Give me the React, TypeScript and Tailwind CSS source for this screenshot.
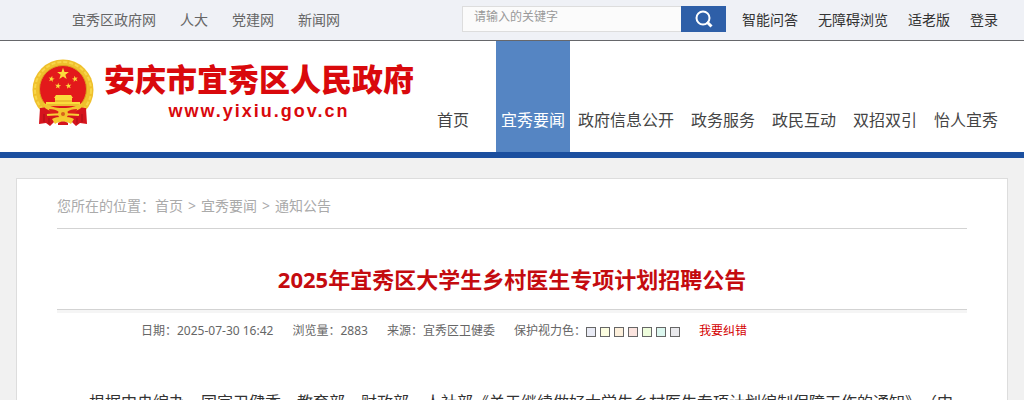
const siteLinks = ['宜秀区政府网', '人大', '党建网', '新闻网'];
const toolLinks = ['智能问答', '无障碍浏览', '适老版', '登录'];
const navLinks = ['政府信息公开', '政务服务', '政民互动', '双招双引', '怡人宜秀'];

const eyeColors = [
  { name: '灰蓝', className: 'bg-[#e9ebf5]' },
  { name: '浅黄', className: 'bg-[#fcfde0]' },
  { name: '杏色', className: 'bg-[#fdf0dc]' },
  { name: '粉红', className: 'bg-[#fbe4df]' },
  { name: '浅绿', className: 'bg-[#eefddc]' },
  { name: '青色', className: 'bg-[#dcf7ef]' },
  { name: '浅灰', className: 'bg-[#e9e9ec]' },
];

const STAR = 'M0-10 2.4-3.2 9.5-3.1 3.8 1.2 5.9 8.1 0 4-5.9 8.1-3.8 1.2-9.5-3.1-2.4-3.2Z';

function Emblem() {
  return (
    <svg viewBox="0 0 62 68" className="h-[68px] w-[62px] shrink-0" aria-hidden="true">
      <circle cx="31" cy="31" r="30.5" fill="#efc02c" />
      <circle cx="31" cy="31" r="28" fill="none" stroke="#f8d648" strokeWidth="2" strokeDasharray="4 2" />
      <circle cx="31" cy="30" r="23.5" fill="#e3191b" stroke="#dc9f1e" strokeWidth="1" />
      <path d="M8 49 7 65l7-1 4 3 5-5h16l5 5 4-3 7 1-1-16-9-1H17Z" fill="#d5141d" />
      <g fill="#fbdc3c">
        <path d={STAR} transform="translate(31 15) scale(.62)" />
        <path d={STAR} transform="translate(19.5 20) rotate(12) scale(.32)" />
        <path d={STAR} transform="translate(43 20) rotate(-12) scale(.32)" />
        <path d={STAR} transform="translate(26 27) rotate(8) scale(.32)" />
        <path d={STAR} transform="translate(36.5 27) rotate(-8) scale(.32)" />
        <path d="M24 36h15l2 3H22ZM23 39h17v4h8v4H14v-4h9Z" />
      </g>
      <path d="M23 42h17M15 46h32" stroke="#dea022" strokeWidth="1" />
      <path d="M11 43c5 4 12 6 20 6s15-2 20-6l-2 6c-5 4-10 4-18 4s-13 0-18-4Z" fill="#f3c530" />
      <path d="M17 50c4 0 8 1 10 3-3 2-6 2-9 1ZM45 50c-4 0-8 1-10 3 3 2 6 2 9 1Z" fill="#dd2019" />
      <path d="M15 56c5-1 10 0 16-1 6 1 11 0 16 1" fill="none" stroke="#f7cf35" strokeWidth="2" />
      <circle cx="31" cy="55" r="5" fill="#f3c52c" />
      <circle cx="31" cy="55" r="2" fill="#d9621c" />
      <path d="M20 60c5-3 17-3 22 0l-3 5c-4-3-12-3-16 0Z" fill="#f5ca30" />
      <path d="M26 64c3-2 7-2 10 0v2H26Z" fill="#d5141d" />
      <path d="M12 55v8M17 59v6M45 59v6M50 55v8" stroke="#a90f16" strokeWidth="1" />
    </svg>
  );
}

function TopBar() {
  return (
    <div className="flex h-[41px] items-center justify-between border-b border-[#66676b] bg-[#eff1f6] pr-[26px] pl-[72px] text-sm">
      <nav className="flex gap-6 text-[#666]" aria-label="相关网站">
        {siteLinks.map((label) => (
          <a key={label} href="#">{label}</a>
        ))}
      </nav>
      <div className="flex items-center">
        <form className="mb-0.5 flex h-[26px] w-[264px]" role="search">
          <input
            type="text"
            aria-label="站内搜索"
            placeholder="请输入的关键字"
            className="min-w-0 flex-1 border border-r-0 border-[#ddd] bg-[#fbfbfb] pb-1 pl-[11px] text-xs placeholder:text-[#999]"
          />
          <button type="button" aria-label="搜索" className="flex w-[45px] items-center justify-center bg-[#2e5fa8]">
            <svg viewBox="0 0 18 18" className="size-[18px]" fill="none" stroke="#fff" strokeWidth="2">
              <circle cx="8" cy="8" r="6.5" />
              <path d="m12 12 4.5 4.5" strokeWidth="3" />
            </svg>
          </button>
        </form>
        <nav className="ml-4 flex gap-5 text-[#333]" aria-label="工具">
          {toolLinks.map((label) => (
            <a key={label} href="#">{label}</a>
          ))}
        </nav>
      </div>
    </div>
  );
}

function Header() {
  return (
    <header className="flex h-[117px] justify-between border-b-6 border-[#1b4f9f] bg-white pr-[26px] pl-8">
      <a href="#" className="flex items-start gap-[10px] pt-[18px] text-[#d9090c]">
        <Emblem />
        <span className="flex flex-col items-center">
          <span className="text-[31px] leading-10 font-black whitespace-nowrap">安庆市宜秀区人民政府</span>
          <span className="font-['Liberation_Sans'] text-lg leading-6 font-bold tracking-[2px]">www.yixiu.gov.cn</span>
        </span>
      </a>
      <nav className="flex items-stretch text-base leading-6 whitespace-nowrap text-[#444]" aria-label="主导航">
        <a href="#" className="mr-[27px] pt-[67px]">首页</a>
        <a href="#" aria-current="page" className="mr-2 bg-[#5585c3] px-[5px] pt-[67px] text-white">宜秀要闻</a>
        <div className="flex gap-[17px] pt-[67px]">
          {navLinks.map((label) => (
            <a key={label} href="#">{label}</a>
          ))}
        </div>
      </nav>
    </header>
  );
}

function ArticleMeta() {
  return (
    <div className="border-t border-[#d3d3d3]">
      <div className="flex items-center gap-[19px] border-t-3 border-[#f5f5f5] pt-2 pl-[84px] text-xs leading-5 text-[#666]">
        <span>日期：2025-07-30 16:42</span>
        <span>浏览量：2883</span>
        <span>来源：宜秀区卫健委</span>
        <div className="flex items-center">
          <span>保护视力色：</span>
          <div className="flex gap-1 pt-0.5">
            {eyeColors.map((color) => (
              <button
                key={color.name}
                type="button"
                aria-label={color.name}
                className={`size-[10px] border border-[#666] ${color.className}`}
              />
            ))}
          </div>
        </div>
        <a href="#" className="text-[#d40000]">我要纠错</a>
      </div>
    </div>
  );
}

export default function App() {
  return (
    <div className="min-h-screen bg-[#f1f1f1] font-['Noto_Sans','Noto_Sans_CJK_SC',sans-serif] [text-spacing-trim:space-all]">
      <TopBar />
      <Header />
      <main className="mx-4 mt-5 border border-[#ddd] bg-white px-10">
        <nav className="flex h-[50px] items-center gap-[5px] border-b border-[#d3d3d3] pt-1 text-sm text-[#aaa]" aria-label="面包屑">
          <span>您所在的位置：<a href="#">首页</a></span>
          <span>&gt;</span>
          <a href="#">宜秀要闻</a>
          <span>&gt;</span>
          <a href="#">通知公告</a>
        </nav>
        <article>
          <h1 className="pt-8 pb-3 text-center text-[22px] leading-9 font-bold text-[#c40b0f]">
            2025年宜秀区大学生乡村医生专项计划招聘公告
          </h1>
          <ArticleMeta />
          <p className="pt-[45px] indent-8 text-base leading-8 text-[#333]">
            根据中央编办、国家卫健委、教育部、财政部、人社部《关于继续做好大学生乡村医生专项计划编制保障工作的通知》（中
          </p>
        </article>
      </main>
    </div>
  );
}
